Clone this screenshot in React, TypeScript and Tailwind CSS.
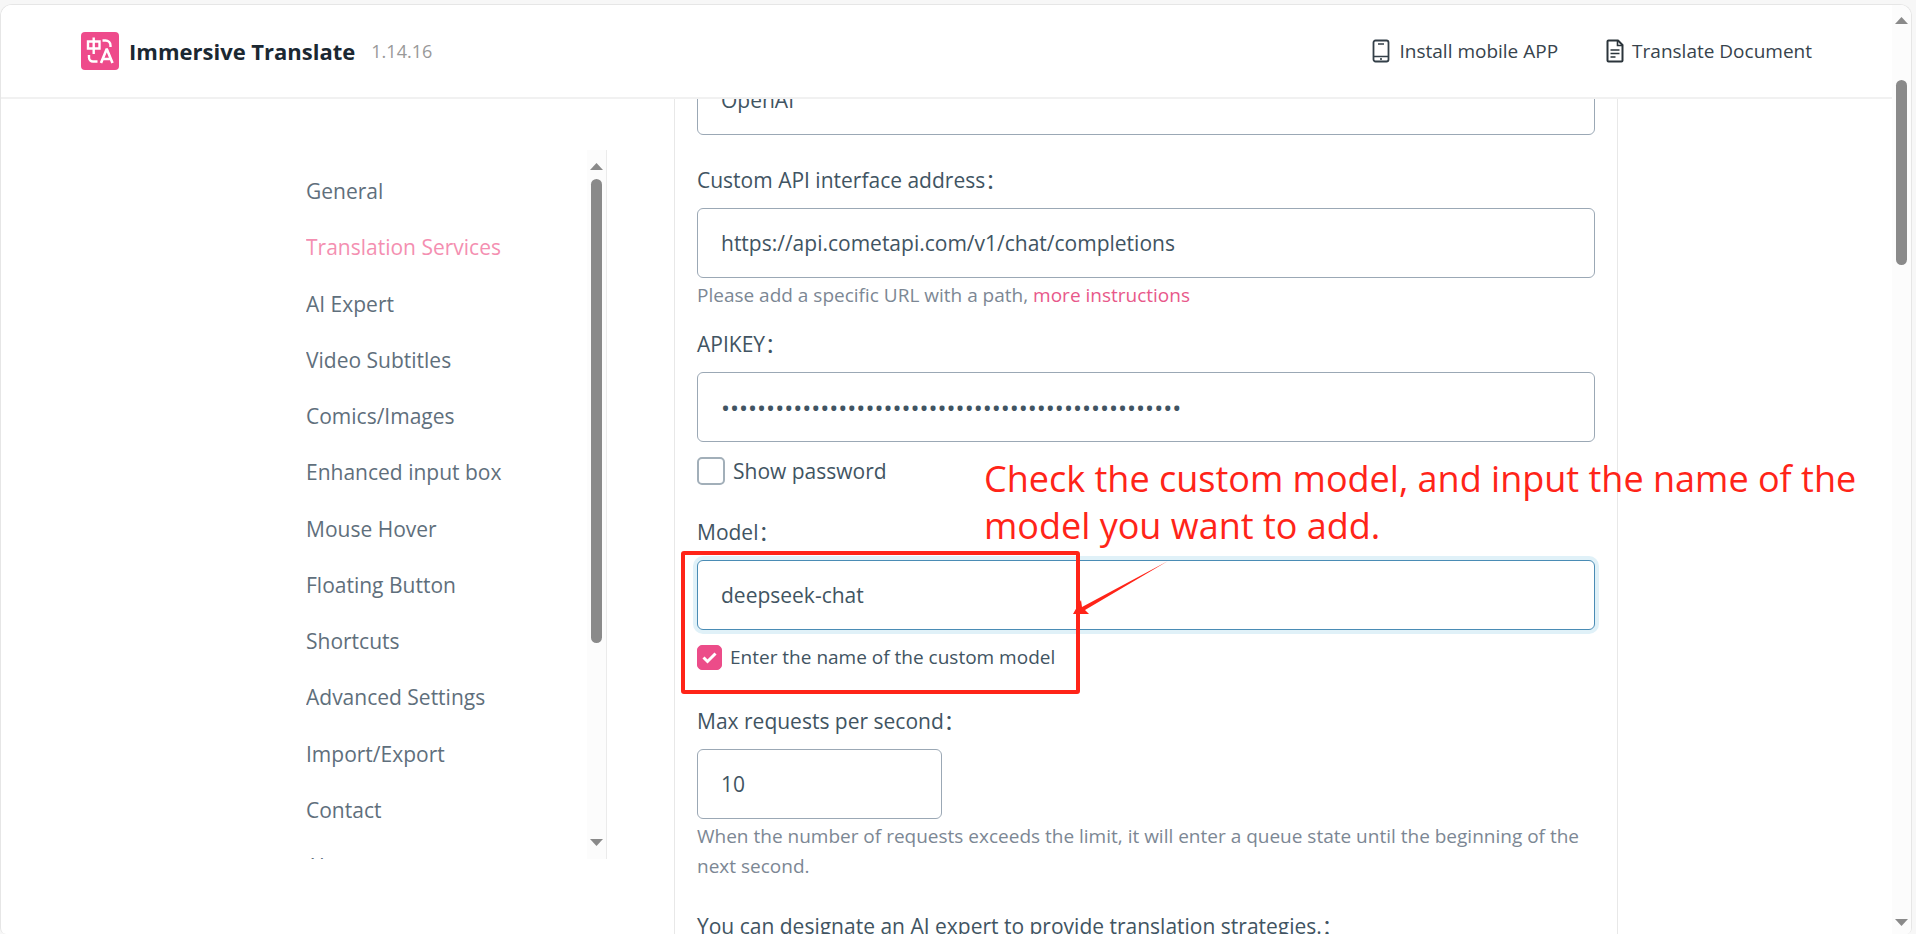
import { useState } from "react"

const NAV_ITEMS = [
  "General",
  "Translation Services",
  "AI Expert",
  "Video Subtitles",
  "Comics/Images",
  "Enhanced input box",
  "Mouse Hover",
  "Floating Button",
  "Shortcuts",
  "Advanced Settings",
  "Import/Export",
  "Contact",
  "About",
]

const inputClass =
  "h-[70px] w-full rounded-[6px] border border-[#9ba8b5] bg-white px-[23px] text-[#415462] outline-none"

function Logo() {
  return (
    <svg viewBox="0 0 38 38" className="h-[38px] w-[38px]" aria-hidden="true">
      <rect width="38" height="38" rx="4" fill="#ee4b8b" />
      <g fill="none" stroke="#fff" strokeWidth="2.4">
        <path d="M7 9.500h11.500v7H7zM12.700 5.500v16.500" />
        <path d="M21.500 8.500h3a5 5 0 0 1 5 5v1.500" />
        <path d="M8 23v2.500a4 4 0 0 0 4 4h4.500" />
        <path d="M20 31l5.500-13.500h.5L31.500 31M22 27h7.500" strokeWidth="2.600" />
      </g>
    </svg>
  )
}

function PhoneIcon() {
  return (
    <svg viewBox="0 0 18 24" className="h-6 w-[18px]" fill="none" stroke="#333f48" strokeWidth="1.800" aria-hidden="true">
      <rect x="1.500" y="1.500" width="15" height="21" rx="2" />
      <path d="M6 5h6M1.500 17.500h15" strokeWidth="1.600" />
      <path d="M8.200 20h1.600" />
    </svg>
  )
}

function DocumentIcon() {
  return (
    <svg viewBox="0 0 18 24" className="h-6 w-[18px]" fill="none" stroke="#2b343b" strokeWidth="2" aria-hidden="true">
      <path d="M2.500 1.500h9.500l4.500 4.500v15.500a1 1 0 0 1-1 1h-13a1 1 0 0 1-1-1v-19a1 1 0 0 1 1-1z" strokeLinejoin="round" />
      <path d="M11.500 1.500v5h5" strokeWidth="1.600" />
      <path d="M4.500 11h9M4.500 14.500h9M4.500 18h5" strokeWidth="1.500" />
    </svg>
  )
}

function ArrowUp() {
  return (
    <svg viewBox="0 0 13 7" className="h-[7px] w-[13px] shrink-0" aria-hidden="true">
      <path d="M6.500 0L13 7H0z" fill="#8a8a8a" />
    </svg>
  )
}

function ArrowDown() {
  return (
    <svg viewBox="0 0 13 7" className="h-[7px] w-[13px] shrink-0" aria-hidden="true">
      <path d="M6.500 7L13 0H0z" fill="#8a8a8a" />
    </svg>
  )
}

function Header() {
  return (
    <header className="relative z-10 flex h-[94px] shrink-0 items-center justify-between border-b-2 border-[#f1f1f1] bg-white px-[80px]">
      <div className="flex items-center">
        <Logo />
        <h1 className="ml-[10px] text-[22px] font-bold text-[#1b2832]">Immersive Translate</h1>
        <span className="ml-4 text-[18px] text-[#999999]">1.14.16</span>
      </div>
      <div className="flex items-center gap-12 text-[19px] text-[#37434c]">
        <a href="#app" className="flex items-center gap-[10px]">
          <PhoneIcon />
          Install mobile APP
        </a>
        <a href="#document" className="flex items-center gap-2">
          <DocumentIcon />
          Translate Document
        </a>
      </div>
    </header>
  )
}

function Sidebar() {
  return (
    <aside className="mt-[51px] flex h-[709px] w-[301px] shrink-0 overflow-hidden">
      <nav className="flex h-[731px] flex-1 flex-col text-[21px] leading-[30px] text-[#5f6f7c]">
        {NAV_ITEMS.map((item) => (
          <a
            key={item}
            href="#settings"
            className={
              item === "Translation Services"
                ? "flex flex-1 items-end text-[#f48fb1]"
                : "flex flex-1 items-end"
            }
          >
            {item}
          </a>
        ))}
      </nav>
      <div className="flex w-5 flex-col items-center border-r border-[#ebebeb] bg-[#fcfcfc] py-[13px]">
        <ArrowUp />
        <div className="mt-[9px] h-[464px] w-[11px] rounded-full bg-[#8a8a8a]" />
        <div className="flex-1" />
        <ArrowDown />
      </div>
    </aside>
  )
}

// Red callout drawn over the model field
function Annotation() {
  return (
    <>
      <div className="pointer-events-none absolute -top-[9px] -left-4 h-[143px] w-[399px] rounded-[3px] border-4 border-[#ff2418]" />
      <p className="pointer-events-none absolute -top-[105px] left-[287px] w-[900px] text-[36px] leading-[47px] text-[#ff2418]">
        Check the custom model, and input the name of the model you want to add.
      </p>
      <svg viewBox="0 0 96 56" className="pointer-events-none absolute top-0 left-[376px] h-14 w-[96px]" aria-hidden="true">
        <path d="M95 1L12 50l4 4H0L8 40l1 7z" fill="#ff2418" />
      </svg>
    </>
  )
}

function ServiceForm() {
  const [showPassword, setShowPassword] = useState(false)
  const [customModel, setCustomModel] = useState(true)

  return (
    <form className="-mt-[34px] text-[21px] text-[#415462]">
      <input aria-label="Service name" defaultValue="OpenAI" className={inputClass} />

      <label htmlFor="api-url" className="mt-[29px] block leading-8">Custom API interface address：</label>
      <input id="api-url" defaultValue="https://api.cometapi.com/v1/chat/completions" className={`mt-3 ${inputClass}`} />
      <p className="mt-[2px] text-[19px] leading-[30px] text-[#7c8794]">
        Please add a specific URL with a path,{" "}
        <a href="#instructions" className="text-[#e8588a]">more instructions</a>
      </p>

      <label htmlFor="api-key" className="mt-[18px] block leading-8">APIKEY：</label>
      <input
        id="api-key"
        type={showPassword ? "text" : "password"}
        defaultValue={"x".repeat(51)}
        className={`mt-3 text-2xl ${inputClass}`}
      />
      <label className="mt-[13px] flex items-center gap-2 leading-8">
        <input
          type="checkbox"
          checked={showPassword}
          onChange={(e) => setShowPassword(e.target.checked)}
          className="h-7 w-7 appearance-none rounded-[5px] border-2 border-[#a2afb9] bg-white checked:bg-[#ec4c89]"
        />
        Show password
      </label>

      <label htmlFor="model" className="mt-[29px] block leading-8">Model：</label>
      <div className="relative mt-3">
        <input
          id="model"
          defaultValue="deepseek-chat"
          className="h-[70px] w-full rounded-[6px] border border-[#4a8cb5] bg-white px-[23px] text-[#415462] ring-4 ring-[#e0f1f8] outline-none"
        />
        <Annotation />
      </div>
      <label className="mt-3 flex items-center gap-2 text-[19px] leading-[30px]">
        <span className="relative flex">
          <input
            type="checkbox"
            checked={customModel}
            onChange={(e) => setCustomModel(e.target.checked)}
            className="h-[25px] w-[25px] appearance-none rounded-[5px] border border-[#a2afb9] bg-white checked:border-[#ec4c89] checked:bg-[#ec4c89]"
          />
          {customModel && (
            <svg viewBox="0 0 25 25" className="pointer-events-none absolute inset-0" fill="none" stroke="#fff" strokeWidth="3" aria-hidden="true">
              <path d="M6.500 12.500l4 4 8-8" />
            </svg>
          )}
        </span>
        Enter the name of the custom model
      </label>

      <label htmlFor="max-requests" className="mt-[33px] block leading-8">Max requests per second：</label>
      <div className="mt-3 w-[245px]">
        <input id="max-requests" defaultValue="10" className={inputClass} />
      </div>
      <p className="mt-[2px] text-[19px] leading-[30px] text-[#7c8794]">
        When the number of requests exceeds the limit, it will enter a queue state until the beginning of the next second.
      </p>

      <label htmlFor="ai-expert" className="mt-[29px] block leading-8">
        You can designate an AI expert to provide translation strategies.：
      </label>
      <input id="ai-expert" className={`mt-3 ${inputClass}`} />
    </form>
  )
}

export default function App() {
  return (
    <div className="h-screen overflow-hidden bg-[#f7f7f7] pt-1 pr-1 font-['Open_Sans','Noto_Sans_CJK_SC',sans-serif]">
      <div className="flex h-full overflow-hidden rounded-t-[12px] rounded-b-[6px] border border-b-0 border-[#e6e6e6] bg-white">
        <div className="flex min-w-0 flex-1 flex-col">
          <Header />
          <div className="flex min-h-0 flex-1 justify-between pr-[274px] pl-[305px]">
            <Sidebar />
            <main className="w-[944px] border-x border-[#e8e8e8] px-[22px]">
              <ServiceForm />
            </main>
          </div>
        </div>
        <div className="flex w-[19px] shrink-0 flex-col items-center bg-[#fcfcfc] pt-3 pb-2">
          <ArrowUp />
          <div className="mt-14 h-[185px] w-[11px] rounded-full bg-[#8a8a8a]" />
          <div className="flex-1" />
          <ArrowDown />
        </div>
      </div>
    </div>
  )
}
